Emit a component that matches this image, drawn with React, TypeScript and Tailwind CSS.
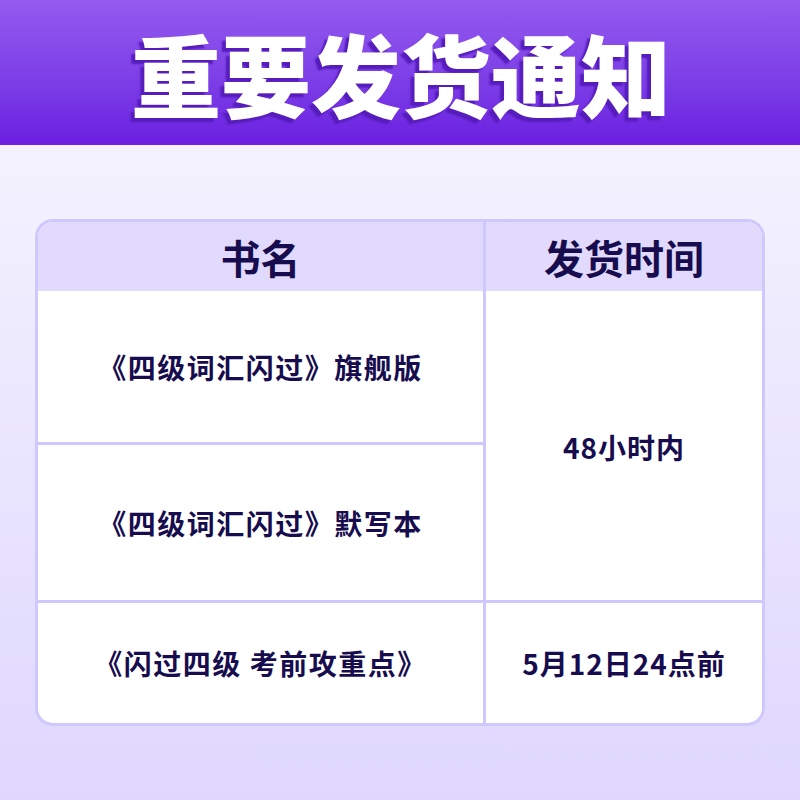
export default function App() {
  const font = { fontFamily: '"Noto Sans CJK SC", "Noto Sans", sans-serif' };
  return (
    <div
      className="w-[800px] h-[800px] flex flex-col bg-gradient-to-b from-[#f9f8fe] to-[#dfd7fe] overflow-hidden"
      style={font}
    >
      <div className="h-[145px] shrink-0 flex items-center justify-center bg-gradient-to-b from-[#955aef] to-[#6b1de0]">
        <div className="text-white text-[90px] font-black leading-none [text-shadow:-4px_4px_2px_#561cbc] -mt-[2px] ml-[2px]">
          重要发货通知
        </div>
      </div>
      <div className="pt-[74px] px-[35px]">
        <div className="border-[3px] border-[#d0c7fc] rounded-[18px] overflow-hidden bg-white text-[#170d4e]">
          <div className="grid grid-cols-[445px_3px_1fr] grid-rows-[69px_151px_3px_155px_3px_120px]">
            <div className="bg-[#e1dafd] flex items-center justify-center text-[40px] font-bold">书名</div>
            <div className="bg-[#d0c7fc]"></div>
            <div className="bg-[#e1dafd] flex items-center justify-center text-[40px] font-bold">发货时间</div>

            <div className="flex items-center justify-center text-[28px] tracking-[1.5px] font-bold">《四级词汇闪过》旗舰版</div>
            <div className="bg-[#d0c7fc] row-span-5"></div>
            <div className="row-span-3 flex items-center justify-center text-[28px] tracking-[1px] font-bold pt-[2px]">48小时内</div>

            <div className="bg-[#d0c7fc]"></div>

            <div className="flex items-center justify-center text-[28px] tracking-[1.5px] font-bold">《四级词汇闪过》默写本</div>

            <div className="bg-[#d0c7fc]"></div>
            <div className="bg-[#d0c7fc]"></div>

            <div className="flex items-center justify-center text-[28px] tracking-[1.5px] font-bold">《闪过四级 考前攻重点》</div>
            <div className="flex items-center justify-center text-[28px] tracking-[1px] font-bold">5月12日24点前</div>
          </div>
        </div>
      </div>
    </div>
  );
}
